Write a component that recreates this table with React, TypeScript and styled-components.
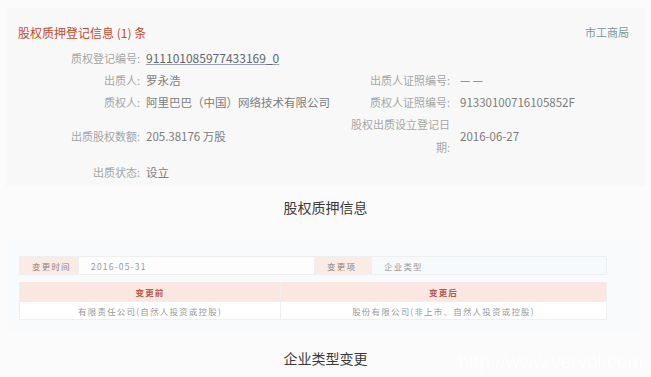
import React from 'react';
import styled, { createGlobalStyle } from 'styled-components';

const GlobalStyle = createGlobalStyle`
  html, body {
    margin: 0;
    padding: 0;
    background: #fbfbfb;
  }
  body {
    font-family: "Noto Sans CJK SC", "Noto Sans", sans-serif;
  }
`

const Page = styled.div`
  width: 651px;
  height: 377px;
  background: #fbfbfb;
  display: flex;
  flex-direction: column;
  position: relative;
  overflow: hidden;
`
const Card = styled.div`
  margin: 8px 6px 0;
  padding: 13px 0 3px;
  background: #f8f8f8;
  display: flex;
  flex-direction: column;
`
const HeaderRow = styled.div`
  display: flex;
  justify-content: space-between;
  align-items: center;
  height: 22px;
  padding: 0 12px 0 12px;
  margin-bottom: 4px;
`
const Title = styled.span`
  font-size: 12px;
  color: #c6492f;
`
const Source = styled.span`
  font-size: 11px;
  color: #7a98a4;
  margin-right: 4px;
`
const InfoGrid = styled.div`
  display: grid;
  grid-template-columns: 134px 210px 100px 1fr;
  align-items: center;
`
const Label = styled.div<{ $tall?: boolean }>`
  font-size: 11px;
  color: #a6a6a6;
  text-align: right;
  line-height: ${({ $tall }) => ($tall ? '23px' : '22px')};
`
const Value = styled.div<{ $pad?: number }>`
  font-size: 11.5px;
  color: #7c7c7c;
  line-height: 22px;
  padding-left: ${({ $pad }) => $pad ?? 6}px;
  white-space: nowrap;
`
const LinkValue = styled.span`
  color: #5e6670;
  font-size: 12px;
  text-decoration: underline;
  text-decoration-color: #9aa0a6;
`
const Spacer = styled.div`
  grid-column: 1 / -1;
  height: 2px;
`
const Caption = styled.div<{ $top: number }>`
  margin-top: ${({ $top }) => $top}px;
  text-align: center;
  font-size: 14px;
  line-height: 20px;
  color: #3a3a3a;
`
const Panel = styled.div`
  margin: 23px 11px 0 8px;
  padding: 16px 0 10px 11px;
  background: #f8fafb;
`
const Table = styled.div`
  width: 588px;
  display: flex;
  flex-direction: column;
`
const TableRow = styled.div<{ $cols: string; $h: number; $gap?: number }>`
  display: grid;
  grid-template-columns: ${({ $cols }) => $cols};
  height: ${({ $h }) => $h}px;
  margin-top: ${({ $gap }) => $gap ?? 0}px;
  border: 1px solid #efefef;
  box-sizing: border-box;
  & + & {
    border-top: ${({ $gap }) => ($gap ? '1px solid #efefef' : 'none')};
  }
`
const Cell = styled.div<{ $kind: 'label' | 'value' | 'head' | 'body'; $bg?: string; $center?: boolean }>`
  display: flex;
  align-items: center;
  justify-content: ${({ $center }) => ($center ? 'center' : 'flex-start')};
  padding-left: ${({ $center }) => ($center ? 0 : 12)}px;
  font-size: 8.5px;
  letter-spacing: 1.2px;
  background: ${({ $kind, $bg }) =>
    $bg ?? ($kind === 'label' ? '#fbebe6' : $kind === 'head' ? '#fbe7e1' : '#ffffff')};
  color: ${({ $kind }) => ($kind === 'head' ? '#b65a47' : $kind === 'label' ? '#8e7f7a' : '#999999')};
  font-weight: ${({ $kind }) => ($kind === 'head' ? 700 : 400)};
  & + & {
    border-left: 1px solid #efefef;
  }
`
const Watermark = styled.div`
  position: absolute;
  right: 8px;
  bottom: 4px;
  font-family: "Liberation Sans", Arial, sans-serif;
  font-size: 19px;
  color: #ffffff;
  text-shadow: 0 0 1px rgba(0, 0, 0, 0.03);
`

export default function App() {
  return (
    <>
      <GlobalStyle />
      <Page>
        <Card>
          <HeaderRow>
            <Title>股权质押登记信息 (1) 条</Title>
            <Source>市工商局</Source>
          </HeaderRow>
          <InfoGrid>
            <Label>质权登记编号:</Label>
            <Value><LinkValue>911101085977433169_0</LinkValue></Value>
            <div />
            <div />

            <Label>出质人:</Label>
            <Value>罗永浩</Value>
            <Label>出质人证照编号:</Label>
            <Value $pad={10}>— —</Value>

            <Label>质权人:</Label>
            <Value>阿里巴巴（中国）网络技术有限公司</Value>
            <Label>质权人证照编号:</Label>
            <Value $pad={10}>91330100716105852F</Value>

            <Label>出质股权数额:</Label>
            <Value>205.38176 万股</Value>
            <Label $tall>股权出质设立登记日期:</Label>
            <Value $pad={10}>2016-06-27</Value>

            <Spacer />
            <Label>出质状态:</Label>
            <Value>设立</Value>
            <div />
            <div />
          </InfoGrid>
        </Card>
        <Caption $top={11}>股权质押信息</Caption>
        <Panel>
          <Table>
            <TableRow $cols="58px 236px 57px 1fr" $h={19}>
              <Cell $kind="label">变更时间</Cell>
              <Cell $kind="value" $bg="#fdfdfd">2016-05-31</Cell>
              <Cell $kind="label">变更项</Cell>
              <Cell $kind="value" $bg="#f6fafc">企业类型</Cell>
            </TableRow>
            <TableRow $cols="260px 1fr" $h={20} $gap={7}>
              <Cell $kind="head" $center>变更前</Cell>
              <Cell $kind="head" $center>变更后</Cell>
            </TableRow>
            <TableRow $cols="260px 1fr" $h={18}>
              <Cell $kind="body" $center>有限责任公司(自然人投资或控股)</Cell>
              <Cell $kind="body" $center>股份有限公司(非上市、自然人投资或控股)</Cell>
            </TableRow>
          </Table>
        </Panel>
        <Caption $top={18}>企业类型变更</Caption>
        <Watermark>http://www.veryol.com</Watermark>
      </Page>
    </>
  )
}
